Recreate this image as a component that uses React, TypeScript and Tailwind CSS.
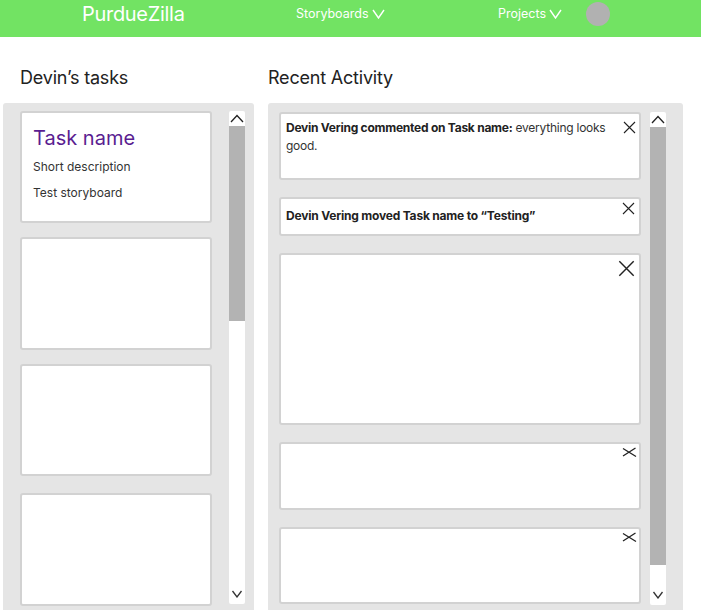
import React from "react";

const Up = () => (
  <svg width="14" height="9" viewBox="0 0 14 9" fill="none">
    <path d="M1 8 L7 1.5 L13 8" stroke="#222" strokeWidth="1.3" />
  </svg>
);
const Down = () => (
  <svg width="12" height="8" viewBox="0 0 12 8" fill="none">
    <path d="M1.5 1 L6 7 L10.5 1" stroke="#333" strokeWidth="1.3" />
  </svg>
);
const Chevron = () => (
  <svg width="13" height="10" viewBox="0 0 13 10" fill="none">
    <path d="M1 1 L6.5 9 L12 1" stroke="#fff" strokeWidth="1.4" />
  </svg>
);
const X = ({ size = 13 }: { size?: number }) => (
  <svg width={size} height={size} viewBox="0 0 13 13" fill="none">
    <path d="M1 1 L12 12 M12 1 L1 12" stroke="#222" strokeWidth="1.1" />
  </svg>
);
const XFlat = () => (
  <svg width="15" height="11" viewBox="0 0 15 11" fill="none">
    <path d="M1 1.5 L14 9.5 M1 9 L13.5 1" stroke="#222" strokeWidth="1.3" />
  </svg>
);

function Scrollbar({ thumbH }: { thumbH: number }) {
  return (
    <div className="w-[16px] h-[493px] bg-white rounded-[2px] flex flex-col items-center shrink-0">
      <div className="h-[15px] flex items-center justify-center">
        <Up />
      </div>
      <div className="w-full bg-[#b3b3b3]" style={{ height: thumbH }} />
      <div className="flex-1" />
      <div className="h-[16px] flex items-start justify-center pt-[2px]">
        <Down />
      </div>
    </div>
  );
}

export default function App() {
  return (
    <div className="w-[701px] h-[610px] overflow-hidden bg-white" style={{ fontFamily: "Inter, 'Noto Sans', sans-serif" }}>
      <header className="h-[37px] bg-[#72e363] flex items-start">
        <div className="h-[28px] flex items-center pl-[82px] w-full text-white">
          <div className="w-[214px] text-[20px] leading-none tracking-[-0.3px]">PurdueZilla</div>
          <div className="w-[202px] flex items-center gap-[3px] text-[12.5px]">
            <span>Storyboards</span>
            <Chevron />
          </div>
          <div className="w-[88px] flex items-center gap-[3px] text-[12.5px]">
            <span>Projects</span>
            <Chevron />
          </div>
          <div className="w-[24px] h-[24px] rounded-full bg-[#b1b1b1]" />
        </div>
      </header>

      <div className="flex pl-[3px] pt-[29px]">
        <div className="w-[251px] flex flex-col">
          <h2 className="ml-[17px] h-[37px] text-[18px] leading-[24px] text-[#222] tracking-[-0.2px]">Devin’s tasks</h2>
          <div className="h-[520px] bg-[#e5e5e5] rounded-[3px] flex pt-[8px] pl-[17px] pr-[8px]">
            <div className="w-[192px] flex flex-col gap-[14px]">
              <div className="h-[112px] bg-white border-2 border-[#d2d2d2] rounded-[3px] px-[11px] pt-[12px]">
                <div className="text-[20px] leading-[26px] text-[#5a1d91]">Task name</div>
                <div className="mt-[8px] text-[12px] leading-[16px] text-[#333]">Short description</div>
                <div className="mt-[10px] text-[12px] leading-[16px] text-[#333]">Test storyboard</div>
              </div>
              <div className="h-[113px] bg-white border-2 border-[#d2d2d2] rounded-[3px]" />
              <div className="h-[112px] bg-white border-2 border-[#d2d2d2] rounded-[3px]" />
              <div className="h-[113px] mt-[3px] bg-white border-2 border-[#d2d2d2] rounded-[3px]" />
            </div>
            <div className="ml-[17px]">
              <Scrollbar thumbH={195} />
            </div>
          </div>
        </div>

        <div className="ml-[14px] w-[415px] flex flex-col">
          <h2 className="h-[37px] text-[18px] leading-[24px] text-[#222] tracking-[-0.2px]">Recent Activity</h2>
          <div className="h-[520px] bg-[#e5e5e5] rounded-[3px] flex pt-[9px] pl-[11px]">
            <div className="w-[362px] flex flex-col gap-[17px]">
              <div className="h-[68px] bg-white border-2 border-[#d2d2d2] rounded-[3px] flex pl-[5px] pr-[3px] pt-[5px]">
                <p className="flex-1 text-[12px] leading-[18px] text-[#333] tracking-[-0.25px]">
                  <b className="font-bold text-[#222]">Devin Vering commented on Task name:</b> everything looks good.
                </p>
                <div className="pt-[2px]"><X /></div>
              </div>
              <div className="h-[39px] bg-white border-2 border-[#d2d2d2] rounded-[3px] flex pl-[5px] pr-[4px]">
                <p className="flex-1 pt-[8px] text-[12px] leading-[18px] font-bold text-[#222] tracking-[-0.2px]">
                  Devin Vering moved Task name to “Testing”
                </p>
                <div className="pt-[3px]"><X /></div>
              </div>
              <div className="h-[172px] bg-white border-2 border-[#d2d2d2] rounded-[3px] flex justify-end pr-[4px] pt-[5px]">
                <X size={17} />
              </div>
              <div className="h-[68px] bg-white border-2 border-[#d2d2d2] rounded-[3px] flex justify-end pr-[2px] pt-[3px]">
                <XFlat />
              </div>
              <div className="h-[77px] bg-white border-2 border-[#d2d2d2] rounded-[3px] flex justify-end pr-[2px] pt-[3px]">
                <XFlat />
              </div>
            </div>
            <div className="ml-[9px]">
              <Scrollbar thumbH={438} />
            </div>
          </div>
        </div>
      </div>
    </div>
  );
}
